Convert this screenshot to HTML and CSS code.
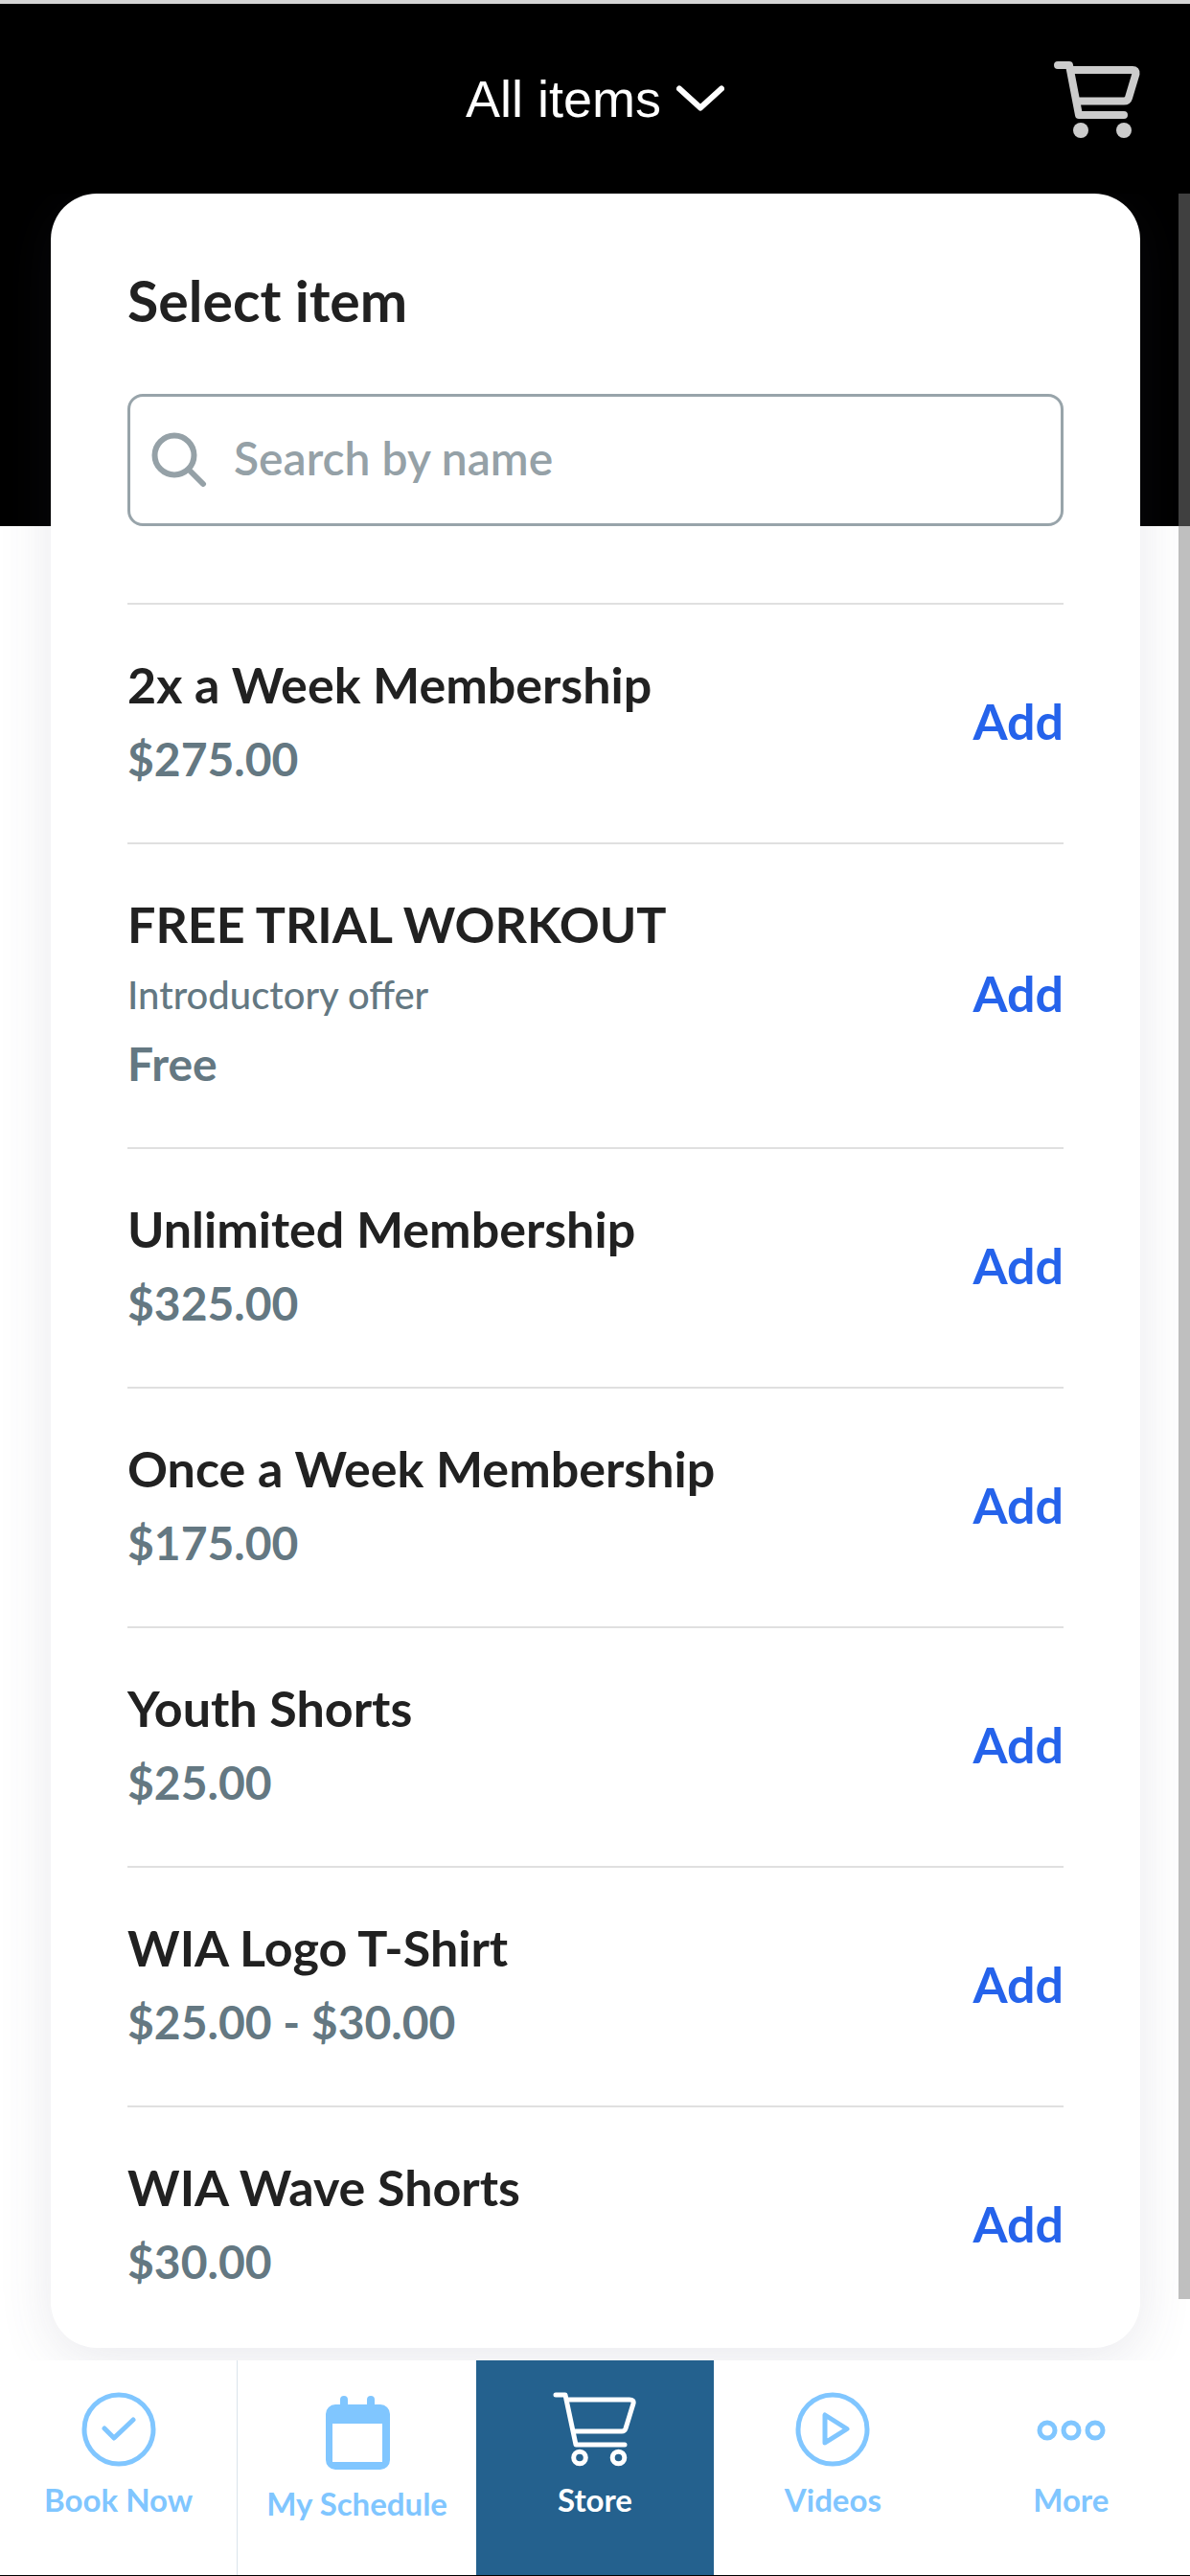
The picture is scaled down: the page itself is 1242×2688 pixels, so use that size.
FILE: index.html
```html
<!DOCTYPE html>
<html lang="en">
<head>
  <meta charset="utf-8">
  <meta name="viewport" content="width=device-width, initial-scale=1">
  <title>Store</title>
  <link rel="stylesheet" href="styles.css">
</head>
<body>
  <div class="page">
    <header class="topbar">
      <label class="filter">
        <select class="filter-select" aria-label="Item category">
          <option>All items</option>
        </select>
        <svg class="filter-chevron" viewBox="0 0 50 28" aria-hidden="true"><path d="M3 3.500 L25 23.500 L47 3.500"/></svg>
      </label>
      <button class="cart-button" type="button" aria-label="Cart">
        <svg class="cart-icon" viewBox="0 0 92 82" aria-hidden="true">
          <path d="M6 6 H18 L28 58 H75 M19 11 H84 Q88 11 87.500 15 L80 40 Q79 43.500 75 43.500 H26"/>
          <circle cx="30" cy="74" r="8"/><circle cx="75" cy="74" r="8"/>
        </svg>
      </button>
    </header>

    <main class="content">
      <section class="card">
        <h1 class="card-title">Select item</h1>
        <label class="search">
          <svg class="search-icon" viewBox="0 0 58 58" aria-hidden="true"><circle cx="24" cy="24" r="20.500"/><path d="M39 39 L54 54"/></svg>
          <input class="search-input" type="search" placeholder="Search by name" aria-label="Search by name">
        </label>
        <ul class="items">
          <li class="item">
            <div class="item-info"><h2 class="item-name">2x a Week Membership</h2><p class="item-price">$275.00</p></div>
            <button class="add" type="button">Add</button>
          </li>
          <li class="item">
            <div class="item-info"><h2 class="item-name">FREE TRIAL WORKOUT</h2><p class="item-note">Introductory offer</p><p class="item-price">Free</p></div>
            <button class="add" type="button">Add</button>
          </li>
          <li class="item">
            <div class="item-info"><h2 class="item-name">Unlimited Membership</h2><p class="item-price">$325.00</p></div>
            <button class="add" type="button">Add</button>
          </li>
          <li class="item">
            <div class="item-info"><h2 class="item-name">Once a Week Membership</h2><p class="item-price">$175.00</p></div>
            <button class="add" type="button">Add</button>
          </li>
          <li class="item">
            <div class="item-info"><h2 class="item-name">Youth Shorts</h2><p class="item-price">$25.00</p></div>
            <button class="add" type="button">Add</button>
          </li>
          <li class="item">
            <div class="item-info"><h2 class="item-name">WIA Logo T-Shirt</h2><p class="item-price">$25.00 - $30.00</p></div>
            <button class="add" type="button">Add</button>
          </li>
          <li class="item">
            <div class="item-info"><h2 class="item-name">WIA Wave Shorts</h2><p class="item-price">$30.00</p></div>
            <button class="add" type="button">Add</button>
          </li>
        </ul>
      </section>
      <div class="scroll-thumb" aria-hidden="true"></div>
    </main>

    <nav class="tabs" aria-label="Main">
      <a class="tab tab-divided" href="#book">
        <svg class="tab-icon" viewBox="0 0 90 80" aria-hidden="true"><circle cx="45" cy="39" r="36"/><path d="M30 38 L40 48 L60 29"/></svg>
        <span>Book Now</span>
      </a>
      <a class="tab" href="#schedule">
        <svg class="tab-icon tab-icon-tall" viewBox="0 0 90 84" aria-hidden="true">
          <path class="solid" fill-rule="evenodd" d="M27 8 a4 4 0 0 1 8 0 V13 H55 V8 a4 4 0 0 1 8 0 V13 H69 a10 10 0 0 1 10 10 V71 a10 10 0 0 1 -10 10 H22 a10 10 0 0 1 -10 -10 V23 a10 10 0 0 1 10 -10 H27 Z M19 33 V73 H71 V33 Z"/>
        </svg>
        <span>My Schedule</span>
      </a>
      <a class="tab tab-active" href="#store" aria-current="page">
        <svg class="tab-icon" viewBox="0 0 90 80" aria-hidden="true">
          <path d="M4 3 H14 L25 55 H76 M15 8 H81 Q86 8 85 12 L77 38 Q76 41 73 41 H22"/>
          <circle cx="29" cy="68.500" r="6.300"/><circle cx="69.500" cy="68.500" r="6.300"/>
        </svg>
        <span>Store</span>
      </a>
      <a class="tab" href="#videos">
        <svg class="tab-icon" viewBox="0 0 90 80" aria-hidden="true"><circle cx="45" cy="39" r="36"/><path d="M37 24 V53 L60 38.500 Z"/></svg>
        <span>Videos</span>
      </a>
      <a class="tab" href="#more">
        <svg class="tab-icon" viewBox="0 0 90 80" aria-hidden="true"><circle cx="20" cy="40" r="8"/><circle cx="45" cy="40" r="8"/><circle cx="70" cy="40" r="8"/></svg>
        <span>More</span>
      </a>
    </nav>
  </div>
</body>
</html>
```
FILE: styles.css
```css
* {
  box-sizing: border-box;
}

body {
  margin: 0;
  background: #fff;
  color: #212121;
  font-family: Lato, "Liberation Sans", sans-serif;
}

h1, h2, p, ul {
  margin: 0;
  padding: 0;
}

button {
  border: 0;
  padding: 0;
  background: none;
  cursor: pointer;
}

svg {
  display: block;
  fill: none;
  stroke: currentColor;
  stroke-linecap: round;
  stroke-linejoin: round;
}

.page {
  display: flex;
  flex-direction: column;
  min-height: 100vh;
}

/* Top bar */
.topbar {
  display: grid;
  grid-template-columns: 1fr auto 1fr;
  align-items: center;
  height: 202px;
  padding: 0 52px;
  border-top: 4px solid #d6d6d6;
  background: #000;
}

.filter {
  grid-column: 2;
  display: flex;
  align-items: center;
  gap: 16px;
  color: #fff;
}

.filter-select {
  appearance: none;
  field-sizing: content;
  border: 0;
  padding: 0;
  background: none;
  color: inherit;
  font: 54px/64px "Liberation Sans", Arial, sans-serif;
}

.filter-chevron {
  width: 50px;
  height: 28px;
  stroke-width: 6;
}

.cart-button {
  justify-self: end;
  color: #ccc;
}

.cart-icon {
  width: 92px;
  height: 82px;
  stroke-width: 8;
}

.cart-icon circle {
  fill: currentColor;
  stroke: none;
}

/* Card over the dark band */
.content {
  position: relative;
  flex: 1;
  overflow: hidden;
  padding: 0 52px 13px 53px;
  background: linear-gradient(#000 347px, #fff 347px);
}

.card {
  padding: 76px 80px 0;
  border-radius: 48px;
  background: #fff;
  box-shadow: 0 12px 56px rgba(70, 70, 110, 0.12);
}

.card-title {
  font-size: 59px;
  line-height: 72px;
  font-weight: 700;
}

.search {
  display: flex;
  align-items: center;
  gap: 28px;
  height: 138px;
  margin: 61px 0 80px;
  padding: 0 22px;
  border: 3px solid #98a4aa;
  border-radius: 16px;
  color: #95a1a7;
}

.search-icon {
  flex: none;
  width: 58px;
  height: 58px;
  stroke-width: 6;
}

.search-input {
  flex: 1;
  min-width: 0;
  border: 0;
  padding: 0 0 4px;
  outline: 0;
  background: none;
  color: #212121;
  font: 600 48px/60px Lato, "Liberation Sans", sans-serif;
}

.search-input::placeholder {
  color: #95a1a7;
  opacity: 1;
}

.items {
  list-style: none;
}

.item {
  display: flex;
  align-items: center;
  justify-content: space-between;
  padding: 51px 0 57px;
  border-top: 2px solid #e0e0e0;
}

.item:last-child {
  padding-bottom: 60px;
}

.item-info {
  display: flex;
  flex-direction: column;
  gap: 16px;
}

.item-name {
  font-size: 52px;
  line-height: 64px;
  font-weight: 700;
}

.item-note {
  color: #647882;
  font-size: 40px;
  line-height: 52px;
  font-weight: 500;
}

.item-price {
  color: #647882;
  font-size: 48px;
  line-height: 60px;
  font-weight: 700;
}

.add {
  color: #2563eb;
  font: 700 52px/64px Lato, "Liberation Sans", sans-serif;
}

.scroll-thumb {
  position: absolute;
  top: 0;
  right: 0;
  bottom: 64px;
  width: 12px;
  background: rgba(128, 128, 128, 0.5);
}

/* Bottom tabs */
.tabs {
  display: grid;
  grid-template-columns: repeat(5, 1fr);
  height: 225px;
  border-bottom: 1px solid #000;
  background: #fff;
}

.tab {
  display: flex;
  flex-direction: column;
  align-items: center;
  gap: 12px;
  padding-top: 33px;
  color: #80c6ff;
  font-size: 33px;
  line-height: 40px;
  font-weight: 700;
  text-decoration: none;
}

.tab-divided {
  border-right: 1px solid #dbe4ec;
}

.tab-active {
  background: #24618e;
  color: #fff;
}

.tab-icon {
  width: 90px;
  height: 80px;
  stroke-width: 5;
}

.tab-icon-tall {
  height: 84px;
}

.tab-icon .solid {
  fill: currentColor;
  stroke: none;
}
```
